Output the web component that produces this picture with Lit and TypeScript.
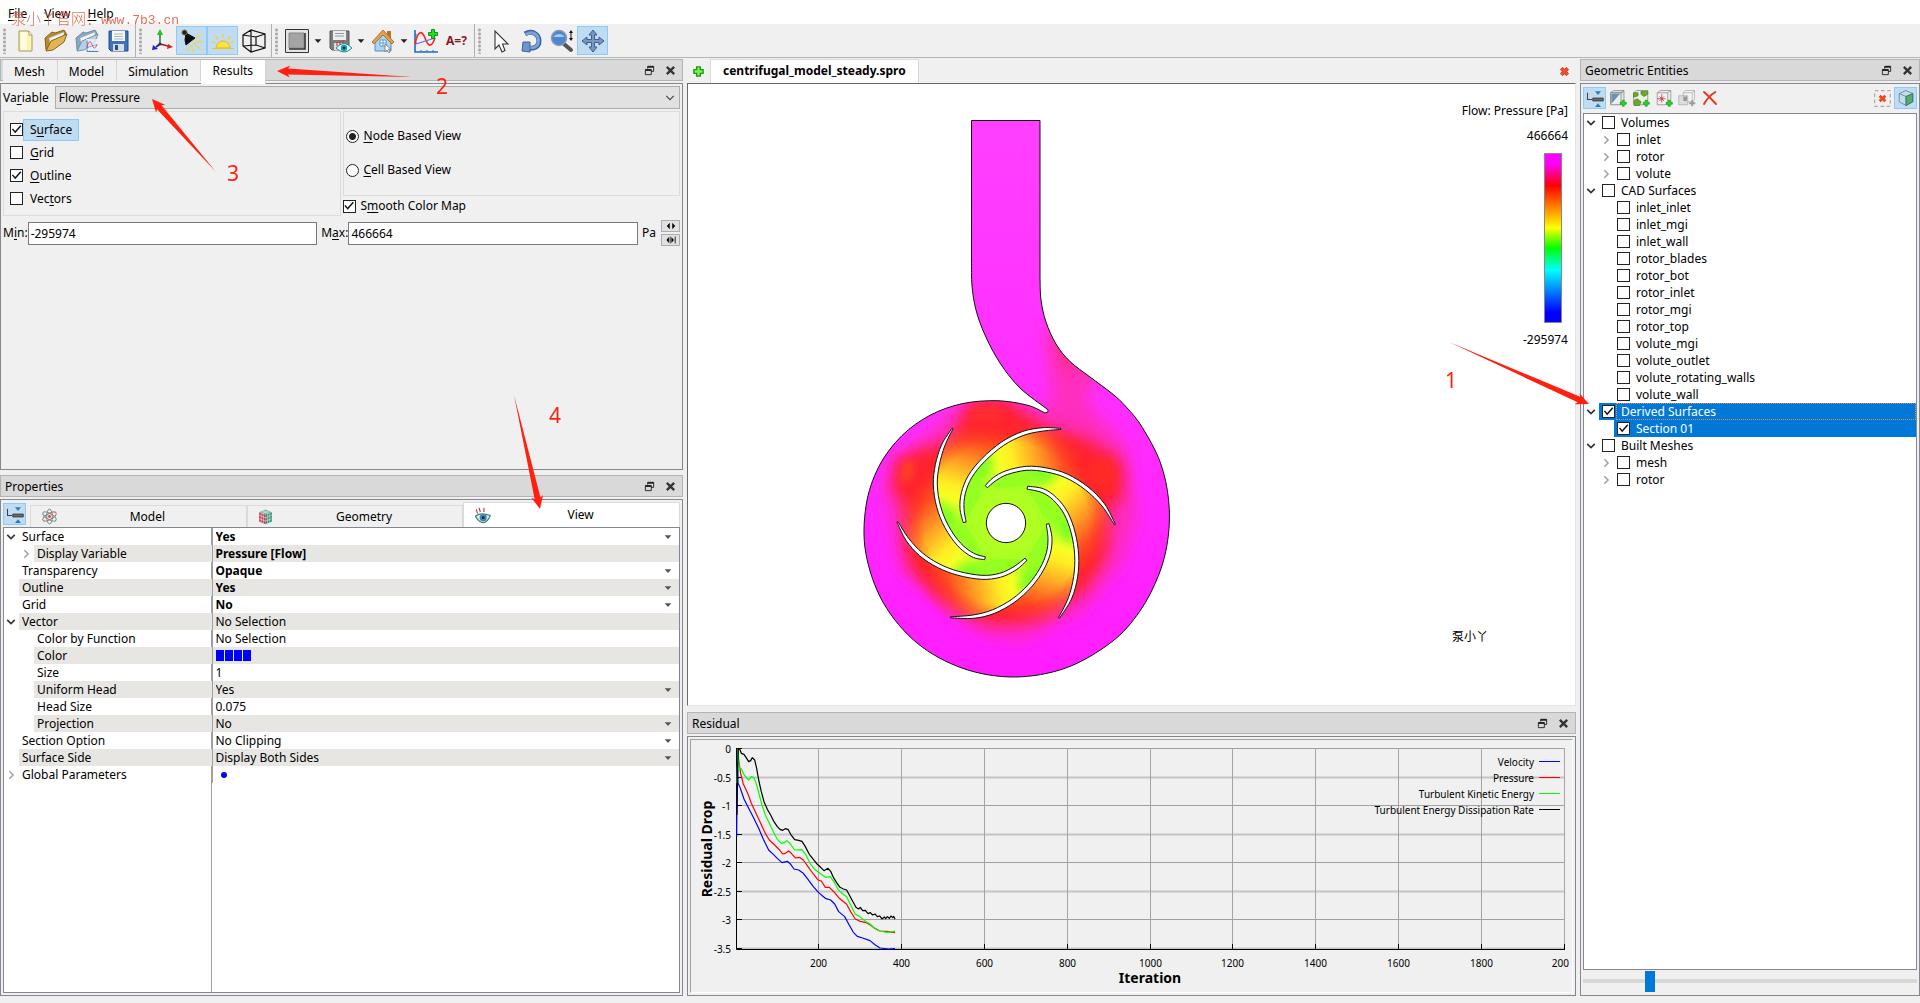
import { LitElement, html, svg, css, nothing, TemplateResult } from "lit";
import { customElement, state } from "lit/decorators.js";
import { classMap } from "lit/directives/class-map.js";

type Pt = [number, number];

/* ---------- geometry helpers ---------- */

const f = (n: number) => n.toFixed(1);

/** Smooth path through the given points (Catmull-Rom as cubic segments). */
function spline(p: Pt[], start = "M"): string {
  let d = `${start}${f(p[0][0])} ${f(p[0][1])}`;
  for (let i = 0; i < p.length - 1; i++) {
    const a = p[Math.max(0, i - 1)], b = p[i], c = p[i + 1], e = p[Math.min(p.length - 1, i + 2)];
    d += `C${f(b[0] + (c[0] - a[0]) / 6)} ${f(b[1] + (c[1] - a[1]) / 6)} ${f(c[0] - (e[0] - b[0]) / 6)} ${f(c[1] - (e[1] - b[1]) / 6)} ${f(c[0])} ${f(c[1])}`;
  }
  return d;
}

/** Closed blade profile around a centre line, pointed at its first point. */
function bladeShape(p: Pt[]): string {
  const left: Pt[] = [], right: Pt[] = [];
  p.forEach((q, i) => {
    const a = p[Math.max(0, i - 1)], b = p[Math.min(p.length - 1, i + 1)];
    const len = Math.hypot(b[0] - a[0], b[1] - a[1]);
    const nx = -(b[1] - a[1]) / len, ny = (b[0] - a[0]) / len;
    const w = i === 0 ? 1.5 : i === p.length - 1 ? 4.5 : i === 1 ? 5 : 6;
    left.push([q[0] + nx * w, q[1] + ny * w]);
    right.push([q[0] - nx * w, q[1] - ny * w]);
  });
  return spline(left) + spline(right.reverse(), "L") + "Z";
}

/** Tapered arrow from tail to tip. */
function arrow(tail: Pt, tip: Pt): string {
  const dx = tip[0] - tail[0], dy = tip[1] - tail[1], l = Math.hypot(dx, dy);
  const ux = dx / l, uy = dy / l;
  const at = (back: number, side: number) =>
    `${f(tip[0] - ux * back - uy * side)},${f(tip[1] - uy * back + ux * side)}`;
  return [`${tail[0]},${tail[1]}`, at(11, 3), at(13, 6), at(0, 0), at(13, -6), at(11, -3)].join(" ");
}

/* ---------- pump section ---------- */

/** Volute wall as [angle in degrees, radius] around its base point, from the tongue round to the diffuser. */
const VOLUTE: Pt[] = [[-84, 122.5], [-98, 127.5], [-113, 134], [-127, 140], [-141, 145], [-156, 148.500], [-172, 150],
  [-190, 151], [-210, 151.500], [-230, 151.500], [-250, 150.500], [-270, 150], [-290, 150], [-310, 150.500], [-326, 151],
  [-342, 152], [-356, 154], [-370, 156.500], [-384, 159.500], [-398, 162], [-407, 164]];
const wall: Pt[] = VOLUTE.map(([a, r]) => {
  const t = (a * Math.PI) / 180;
  return [1014.5 + r * Math.cos(t), 527 + r * Math.sin(t)];
});
const PIPE_INNER: Pt[] = [[971.5, 262], [972, 286], [976, 310], [985, 335], [1000, 363], [1020, 388], [1047, 409]];
const DIFFUSER: Pt[] = [[1112, 393.5], [1090, 377], [1070, 361.5], [1056, 344], [1046, 322], [1041, 300], [1040, 278]];
const CASING = `M971.5 120.5${spline(PIPE_INNER, "L")}Q1050 412 1045 413${spline([[1045, 413], ...wall, ...DIFFUSER], "L")}L1040 120.5Z`;

const BLADES: Pt[][] = [
  [[338, 145], [310, 195], [292, 255], [286, 315], [296, 380], [320, 440], [357, 493], [398, 525], [435, 535]],
  [[663, 147], [610, 148], [550, 160], [488, 191], [430, 240], [390, 290], [370, 340], [366, 385], [374, 427]],
  [[825, 434], [790, 375], [740, 325], [680, 288], [620, 270], [560, 265], [500, 278], [463, 298], [439, 320]],
  [[657, 714], [690, 655], [707, 590], [710, 525], [700, 460], [678, 400], [645, 357], [608, 332], [562, 323]],
  [[331, 712], [400, 710], [460, 695], [520, 662], [570, 617], [605, 568], [625, 520], [630, 475], [623, 432]],
  [[172, 425], [202, 478], [243, 523], [295, 557], [355, 580], [425, 592], [480, 586], [525, 565], [558, 538]],
];
const PASSAGE = spline(BLADES[1]) + spline([...BLADES[2]].reverse(), "L") + "L870 260L760 120Z";

const pump = svg`
  <defs>
    <linearGradient id="body" x1="0" y1="0" x2="0" y2="1">
      <stop offset="0" stop-color="#ff40ff"/><stop offset="1" stop-color="#ff1cff"/>
    </linearGradient>
    <linearGradient id="passage" gradientUnits="userSpaceOnUse" x1="410" y1="300" x2="800" y2="205">
      <stop offset="0" stop-color="#96ff22"/><stop offset=".1" stop-color="#b4ff22"/>
      <stop offset=".2" stop-color="#f6ff24"/><stop offset=".3" stop-color="#ffec24"/>
      <stop offset=".48" stop-color="#ffa024"/><stop offset=".66" stop-color="#ff4c20"/>
      <stop offset=".8" stop-color="#ff2824"/><stop offset=".9" stop-color="#ff2828" stop-opacity=".4"/>
      <stop offset="1" stop-color="#ff2828" stop-opacity="0"/>
    </linearGradient>
    <radialGradient id="eye">
      <stop offset="0" stop-color="#c0ff22"/><stop offset=".75" stop-color="#aaff22"/><stop offset="1" stop-color="#b4ff22"/>
    </radialGradient>
    <radialGradient id="reach" gradientUnits="userSpaceOnUse" cx="498" cy="429" r="340">
      <stop offset=".72" stop-color="#fff"/><stop offset="1" stop-color="#000"/>
    </radialGradient>
    <mask id="rim" maskUnits="userSpaceOnUse" x="100" y="50" width="800" height="760"><rect x="100" y="50" width="800" height="760" fill="url(#reach)"/></mask>
    <filter id="soft" x="-50%" y="-50%" width="200%" height="200%"><feGaussianBlur stdDeviation="24"/></filter>
    <filter id="mild" x="-50%" y="-50%" width="200%" height="200%"><feGaussianBlur stdDeviation="12"/></filter>
    <clipPath id="casing"><path d=${CASING}/></clipPath>
    <clipPath id="channel"><path d=${PASSAGE}/></clipPath>
  </defs>
  <g clip-path="url(#casing)">
    <rect x="860" y="115" width="315" height="570" fill="url(#body)"/>
    <g transform="translate(840 380) scale(.3333)">
      <g filter="url(#soft)">
        <path d="M610-180L690-90L790-20L730 60L860 200L890 420L840 560L720 700L560 780L430 770L330 690L180 570L130 320L230 190L340 90L560 70L640 80Z" fill="#ff2c90" opacity=".6"/>
        <path d="M380 60L500 50L620 140L740 170L850 240L855 350L800 400L790 540L730 640L600 700L480 730L400 715L310 650L210 570L190 480L215 400L150 330L160 240L240 200L330 190Z" fill="#ff2230"/>
        <path d="M630-150L710-90L690-20Z" fill="#ff2a60"/>
      </g>
      <g filter="url(#mild)">
        <ellipse cx="440" cy="105" rx="50" ry="26" fill="#ff2e30"/>
        <ellipse cx="203" cy="275" rx="16" ry="34" fill="#ff4a24" transform="rotate(20 203 275)"/>
        <ellipse cx="785" cy="285" rx="45" ry="50" fill="#ff2a26"/>
        <circle cx="498" cy="429" r="210" fill="#ff9a24"/>
      </g>
      <circle cx="498" cy="429" r="150" fill="url(#eye)"/>
      <g mask="url(#rim)">
      ${[0, 60, 120, 180, 240, 300].map((a) => svg`
        <g transform="rotate(${a} 498 429)"><g clip-path="url(#channel)">
          <path d=${PASSAGE} fill="url(#passage)"/>
          <ellipse cx="428" cy="262" rx="14" ry="36" fill="#5cff28" opacity=".7" filter="url(#mild)" transform="rotate(38 428 262)"/>
        </g></g>`)}
      </g>
    </g>
  </g>
  <path d=${CASING} fill="none" stroke="#111" stroke-width="1"/>
  <g transform="translate(840 380) scale(.3333)" fill="#fff" stroke="#111" stroke-width="3" stroke-linejoin="round">
    ${BLADES.map((b) => svg`<path d=${bladeShape(b)}/>`)}
    <circle cx="498" cy="429" r="59"/>
  </g>`;

/* ---------- residual history ---------- */

const X0 = 736, X1 = 1565, Y0 = 748, Y1 = 949;
const CURVES: { name: string; color: string; pts: string }[] = [
  { name: "Velocity", color: "#0000ff", pts: "170,410 172,150 174,250 180,262 192,297 206,325 220,352 236,385 250,418 266,450 280,463 292,475 306,488 322,484 332,493 342,507 356,510 370,520 384,538 400,560 416,578 436,595 452,600 464,612 476,635 494,650 506,672 520,697 532,709 548,714 570,722 586,735 600,744 625,747 645,746" },
  { name: "Pressure", color: "#ff0000", pts: "172,147 176,180 182,220 190,252 204,282 214,310 228,340 242,370 256,400 268,420 284,435 296,447 308,462 316,460 326,453 334,460 346,474 358,472 370,480 384,500 400,522 414,540 424,543 436,562 448,562 462,576 478,595 500,613 512,635 526,657 540,664 556,667 572,676 586,686 600,693 620,694 645,698" },
  { name: "Turbulent Kinetic Energy", color: "#00ff00", pts: "171,250 174,147 178,210 184,206 192,224 200,234 206,240 214,230 222,233 230,255 238,285 246,315 256,345 268,370 280,395 292,418 304,430 312,428 320,422 330,430 344,450 366,449 378,465 390,490 404,508 420,520 436,532 450,530 462,545 474,568 486,580 500,590 512,615 526,643 540,650 556,664 570,672 584,685 600,693 620,697 645,694" },
  { name: "Turbulent Energy Dissipation Rate", color: "#000000", pts: "171,345 173,200 175,147 179,147 184,160 192,163 200,175 206,185 212,182 217,173 224,180 230,205 236,240 244,275 252,305 262,328 272,345 282,365 292,380 300,388 308,391 316,386 324,388 332,403 344,419 356,421 366,424 376,440 388,463 400,478 412,493 422,502 432,512 444,505 452,514 460,532 470,548 480,562 490,567 500,570 508,585 518,604 528,622 536,627 541,622 548,632 556,631 564,641 571,638 578,645 585,642 592,650 599,648 606,657 613,651 617,656 622,650 628,655 633,648 638,653 641,649 645,658" },
];
const Y_TICKS = ["0", "-0.5", "-1", "-1.5", "-2", "-2.5", "-3", "-3.5"];
const X_TICKS = ["200", "400", "600", "800", "1000", "1200", "1400", "1600", "1800", "200"];

const residualPlot = () => svg`
  ${Y_TICKS.map((t, i) => {
    const y = Math.round(Y0 + i * 28.5) + 0.5;
    return svg`<path d="M${X0} ${y}H${X1}" stroke=${i % 2 ? "#c4c4c6" : "#a0a0a4"} stroke-width=${i % 2 ? 2 : 1}/>
      <path d="M${X0} ${y}h6" stroke="#000"/>
      <text x="731" y=${y + 4} text-anchor="end">${t}</text>`;
  })}
  ${X_TICKS.map((t, i) => {
    const x = Math.round(X0 + (i + 1) * 82.9) - 0.5;
    return svg`<path d="M${x} ${Y0}V${Y1}" stroke="#a4a4a8"/><path d="M${x} ${Y1}v-5" stroke="#000"/>
      <text x=${i === 9 ? 1569 : x} y="967" text-anchor=${i === 9 ? "end" : "middle"}>${t}</text>`;
  })}
  <path d="M736.5 748V949.5H1565" fill="none" stroke="#000"/>
  <g transform="translate(680 700) scale(.3333)" fill="none" stroke-width="3.6" stroke-linejoin="round">
    ${CURVES.map((c) => svg`<polyline points=${c.pts} stroke=${c.color}/>`)}
  </g>
  ${CURVES.map((c, i) => svg`<text x="1534" y=${766 + i * 16} text-anchor="end">${c.name}</text>
    <path d="M1539 ${761.5 + i * 16}h21" stroke=${c.color}/>`)}
  <text class="axis" x="1150" y="983" text-anchor="middle">Iteration</text>
  <text class="axis" transform="translate(712 849) rotate(-90)" text-anchor="middle">Residual Drop</text>`;

/* ---------- icons ---------- */

const icon = (body: TemplateResult, size = 24) =>
  html`<svg width=${size} height=${size} viewBox="0 0 24 24" fill="none" aria-hidden="true">${body}</svg>`;

const plus = (x: number, y: number, s = 1) =>
  svg`<path transform="translate(${x} ${y}) scale(${s})" d="M-1.5-4.5h3v3h3v3h-3v3h-3v-3h-3v-3h3z" fill="#1fe01f" stroke="#0a8a0a" stroke-width=".9"/>`;

const folder = (a: string, b: string, edge: string) => svg`
  <path d="M2 21L1 9L8 3L11 4L20 1L22 4L20 9z" fill=${a} stroke=${edge} stroke-width=".9"/>
  <path d="M5 9L20 3L20 8L7 19z" fill="#f4f4f4" stroke="#aaa" stroke-width=".5"/>
  <path d="M2 22L7 12L23 5L20 13L9 21z" fill=${b} stroke=${edge} stroke-width=".9"/>`;

const waves = svg`<path d="M1 1V23H24" stroke="#1d6fb8" stroke-width="1.6"/>
  <path d="M7 23v-2M13 23v-2M19 23v-2M1 6h2M1 14h2" stroke="#1d6fb8"/>
  <path d="M1 15C4 1 8 1 11 9S17 20 21 9" stroke="#ff2424" stroke-width="1.6"/><path d="M2 15L21 9" stroke="#6a6af0" stroke-width="1.3"/>`;

const I = {
  newFile: svg`<path d="M6 2h10l3 4v16H6z" fill="#fbf3b4" stroke="#a89a5a"/><path d="M8 3h6v18H8z" fill="#fffbe0"/><path d="M16 2v4h3" fill="#fff" stroke="#a89a5a"/>`,
  open: folder("#b98a2c", "#e2b551", "#7c5a12"),
  openChart: svg`${folder("#86a8c0", "#b4d2e6", "#6a8aa2")}<rect x="11" y="10" width="13" height="14" fill="#eef2f8" opacity=".75"/><g transform="translate(11.500 11) scale(.5)">${waves}</g>`,
  save: svg`<path d="M3 2h19v20H5l-2-2z" fill="#3f74bb" stroke="#1e4a86"/><path d="M6 2h13v10H6z" fill="#f5f8fc"/><path d="M8 5h9M8 7.500h9M8 10h9" stroke="#aab8c8"/><path d="M7 15h11v7H7z" fill="#d4dde8"/><path d="M9 16h3v5H9z" fill="#2b4f80"/>`,
  axes: svg`<path d="M11 15V5" stroke="#1f8f3a" stroke-width="1.6"/><path d="M11 0l3 6H8z" fill="#22c422"/><path d="M11 15l8 2" stroke="#b01818" stroke-width="1.600"/><path d="M24 18l-6 2 1-5z" fill="#e02020"/><path d="M11 15l-4 3" stroke="#1818b0" stroke-width="1.600"/><path d="M3 21l1-5 5 4z" fill="#2020d0"/><circle cx="11" cy="15" r="1.500" fill="#333"/>`,
  lamp: svg`<path d="M6 4l9 5-4 3-5 4-1-5z" fill="#0c0c0c" stroke="#0c0c0c"/><circle cx="4.500" cy="3.500" r="2.500" fill="#222" stroke="#7a6a30"/><path d="M13 13l8 8M11 16l3 7M15 12l8 1M9 18l-2 5M16 9l5-4" stroke="#f4d640" stroke-width="1.700" stroke-dasharray="4 1"/>`,
  sun: svg`<path d="M5 19a7 7 0 0 1 14 0z" fill="#ffe23c" stroke="#e0b820"/><path d="M1 19.500h22" stroke="#e8c430"/><path d="M12 9V5M7 10.500L4.500 7M17 10.500L19.500 7M4 14L1 12M20 14l3-2" stroke="#f4ce34" stroke-width="1.400"/>`,
  frustum: svg`<path d="M1 6L9 1L23 5V19L9 23L1 17ZM9 1V23M1 6L14 8V16L1 17M14 8L23 5M14 16L23 19" stroke="#111" stroke-width="1.200"/>`,
  square: svg`<path d="M.5.5h23v23H.5z" fill="#e4e4e4" stroke="#333"/><path d="M4 4h15v15H4z" fill="#a4a4a4" stroke="#888"/><path d="M4 20h16V4" stroke="#333" stroke-width="1.600"/>`,
  saveEye: svg`<path d="M2 2h19v19H4l-2-2z" fill="#7c7c7c" stroke="#555"/><path d="M5 2h13v9H5z" fill="#ededed"/><path d="M7 4.500h9M7 7h9" stroke="#999"/><path d="M6 14h8v7H6z" fill="#ddd"/><path d="M9 13v4M12 12v4M15 11v4" stroke="#c03030"/><path d="M8 19q8-9 16 0q-8 8-16 0z" fill="#e6fbff" stroke="#1f8a96"/><circle cx="16" cy="19" r="3.200" fill="#1c9cb0"/><circle cx="16" cy="19" r="1.300" fill="#022"/>`,
  home: svg`<path d="M4 11v11h16V11l-8-8z" fill="#a8d4f6" stroke="#5a8fc0"/><path d="M16 2h4v8l-4-4z" fill="#b8742c"/><path d="M1 13L12 1l11 12-2 2L12 6l-9 9z" fill="#e2a04a" stroke="#9c6420" stroke-width=".8"/><path d="M9 11h6v6H9zM12 11v6M9 14h6" fill="#fff" stroke="#4a86c0" stroke-width=".8"/><path d="M14 15v8l2-2 2 3 1-1-1.500-3H20z" fill="#fff" stroke="#666" stroke-width=".7"/>`,
  chartPlus: svg`${waves}${plus(19, 5)}`,
  pointer: svg`<path d="M7 2V20L11 16L14 23L17 21.500L14.500 15H20z" fill="#fff" stroke="#333" stroke-width="1.100"/>`,
  rotate: svg`<path d="M6 5C13 1 20 5 20 12C20 18 15 20 9 19" stroke="#3d62a0" stroke-width="5"/><path d="M6.500 5.500C13 1.500 19.500 5 19.500 12C19.500 17.500 15 19.500 9 18.500" stroke="#7ba2d8" stroke-width="3"/><path d="M4 13h7v10L3 22z" fill="#6d95ce" stroke="#3d62a0"/>`,
  zoom: svg`<path d="M14 15l7 6" stroke="#555" stroke-width="4" stroke-linecap="round"/><circle cx="9" cy="9" r="7.500" fill="#4a86d2" stroke="#8a9ab0" stroke-width="1.500"/><path d="M3.500 8a6 5 0 0 1 11 0z" fill="#a4c8f0"/><path d="M21 2v9" stroke="#111"/><path d="M19 4l2-3 2 3zM19 9l2 3 2-3z" fill="#111"/>`,
  move: svg`<path d="M12 1l4 5h-2.500v4.500H18V8l5 4-5 4v-2.500h-4.500V18H16l-4 5-4-5h2.500v-4.500H6V16l-5-4 5-4v2.500h4.500V6H8z" fill="#7797c4" stroke="#3d5c90"/>`,
  collapse: svg`<path d="M2 5v9h6" stroke="#444" stroke-width="1.400"/><path d="M9 12h14v4H9z" fill="#666" stroke="#333"/><path d="M12 3h8l-4 5zM12 24h8l-4-5z" fill="#2c7cb8"/>`,
  section: svg`<path d="M2 5l4-3h14l-4 3zM16 5l4-3v14" fill="#ddd" stroke="#888"/><path d="M2 5h14v16H2z" fill="#e8f0f4" stroke="#777"/><path d="M3 6h12L3 20z" fill="#6f92ac"/>${plus(19, 19, 0.9)}`,
  iso: svg`<path d="M2 5l4-3h15v15l-4 4H2z" fill="#e8f0e8" stroke="#888"/><path d="M2 5h6v4l-6 2zM12 3h9v4l-5 3-4-3zM3 15l4-2 5 4-2 5H3z" fill="#6fa82a" stroke="#4f8418"/>${plus(19, 19, 0.9)}`,
  point: svg`<path d="M3 5l4-3h14v15l-4 4H3zM3 5h14v16M17 5l4-3" fill="#f2f2f2" stroke="#888"/><path d="M9 7v11M3 13h11M6 10l6 6M12 10l-6 6" stroke="#d82020"/>${plus(19, 19, 0.9)}`,
  boxes: svg`<path d="M7 5l3-3h12v12l-3 3H7zM7 5h12v12M19 5l3-3" fill="#f4f4f4" stroke="#aaa"/><path d="M1 9h12v12H1z" fill="#ddd" stroke="#aaa"/><path d="M7 10h5v6H7z" fill="#999"/><path d="M19 15v8M15 19h8" stroke="#999" stroke-width="2.500"/>`,
  remove: svg`<path d="M3 3q6 5 18 18M20 3Q10 9 3 21" stroke="#e8321e" stroke-width="2.800" stroke-linecap="round"/>`,
  clear: svg`<path d="M1 1h22v22H1z" stroke="#777" stroke-dasharray="5 3.800"/><path d="M8 8l8 8M16 8l-8 8" stroke="#f0481c" stroke-width="4"/>`,
  cube: svg`<path d="M3 6l9-4 9 4v11l-9 5-9-5z" fill="#c6dcec" stroke="#54788c"/><path d="M3 6l9 4 9-4M12 10v12" stroke="#54788c"/><path d="M12 10l9-4v11l-9 5z" fill="#58a878" stroke="#2c6c48"/>`,
  atom: svg`<g stroke-width="1.400"><ellipse cx="12" cy="12" rx="4" ry="10.500" stroke="#5a8f88"/><ellipse cx="12" cy="12" rx="4" ry="10.500" stroke="#c06a6a" transform="rotate(60 12 12)"/><ellipse cx="12" cy="12" rx="4" ry="10.500" stroke="#6a9a92" transform="rotate(-60 12 12)"/></g><circle cx="12" cy="12" r="2" fill="#d04848"/>`,
  rubik: svg`<path d="M3 6l9 3v14l-9-4z" fill="#c83c48"/><path d="M12 9l9-3v13l-9 4z" fill="#2f8f6c"/><path d="M3 6l9-4 9 4-9 3z" fill="#7ab8a8"/><path d="M6 7v13M9 8v14M15 8v14M18 7v13M3 10l9 4 9-4M3 15l9 3.500 9-3.500M7.500 4l9 3.500M16.500 4l-9 3.500" stroke="#eee" stroke-width=".8"/>`,
  eye: svg`<path d="M2 13Q9 7 23 12Q19 22 13 22Q6 21 2 13z" fill="#d8ecec" stroke="#3e8078" stroke-width="1.600"/><circle cx="13" cy="15" r="5" fill="#3f86b4"/><circle cx="13" cy="15" r="2" fill="#123"/><path d="M5 9L3 3M9 7L7 1M14 7V1" stroke="#a03c3c" stroke-width="1.500"/>`,
  float: svg`<path d="M8 8V3h13v11h-5" stroke="#222" stroke-width="2"/><path d="M8 4h13" stroke="#222" stroke-width="4"/><path d="M3 10h13v11H3z" stroke="#222" stroke-width="2"/><path d="M3 11h13" stroke="#222" stroke-width="4"/>`,
  close: svg`<path d="M4 4l16 16M20 4L4 20" stroke="#333" stroke-width="5"/>`,
  redX: svg`<path d="M5 5l14 14M19 5L5 19" stroke="#b8381c" stroke-width="8"/><path d="M5 5l14 14M19 5L5 19" stroke="#f4502c" stroke-width="5.500"/>`,
  addTab: svg`<path d="M8 2h8v6h6v8h-6v6H8v-6H2V8h6z" fill="#86f04c" stroke="#189a18" stroke-width="3"/>`,
  caret: svg`<path d="M2 7h20L12 18z" fill="#222"/>`,
  down: svg`<path d="M3 7l9 9 9-9" stroke="#333" stroke-width="4"/>`,
  downThin: svg`<path d="M3 7l9 9 9-9" stroke="#444" stroke-width="2.600"/>`,
  right: svg`<path d="M8 3l9 9-9 9" stroke="#a0a0a0" stroke-width="3.600"/>`,
  pick: svg`<path d="M2 7h20L12 18z" fill="#555"/>`,
  fit: svg`<path d="M9 4L2 12l7 8zM15 4l7 8-7 8z" fill="#000"/>`,
  fitIn: svg`<path d="M7 5L1 12l6 7zM13 5l6 7-6 7z" fill="#000"/><path d="M10 4v16M22 4v16" stroke="#000" stroke-width="2"/>`,
};

/* ---------- data ---------- */

interface Entity { name: string; level: 0 | 1; arrow?: "down" | "right"; on?: boolean; sel?: boolean }
const leaf = (name: string): Entity => ({ name, level: 1 });
const ENTITIES: Entity[] = [
  { name: "Volumes", level: 0, arrow: "down" },
  ...["inlet", "rotor", "volute"].map((name): Entity => ({ name, level: 1, arrow: "right" })),
  { name: "CAD Surfaces", level: 0, arrow: "down" },
  ...["inlet_inlet", "inlet_mgi", "inlet_wall", "rotor_blades", "rotor_bot", "rotor_inlet", "rotor_mgi", "rotor_top",
    "volute_mgi", "volute_outlet", "volute_rotating_walls", "volute_wall"].map(leaf),
  { name: "Derived Surfaces", level: 0, arrow: "down", on: true, sel: true },
  { name: "Section 01", level: 1, on: true, sel: true },
  { name: "Built Meshes", level: 0, arrow: "down" },
  { name: "mesh", level: 1, arrow: "right" },
  { name: "rotor", level: 1, arrow: "right" },
];

interface Prop { name: string; level: 0 | 1; value?: string; arrow?: "down" | "right"; pick?: boolean; bold?: boolean; mark?: "swatch" | "dot" }
const PROPS: Prop[] = [
  { name: "Surface", level: 0, value: "Yes", arrow: "down", pick: true, bold: true },
  { name: "Display Variable", level: 1, value: "Pressure [Flow]", arrow: "right", bold: true },
  { name: "Transparency", level: 0, value: "Opaque", pick: true, bold: true },
  { name: "Outline", level: 0, value: "Yes", pick: true, bold: true },
  { name: "Grid", level: 0, value: "No", pick: true, bold: true },
  { name: "Vector", level: 0, value: "No Selection", arrow: "down" },
  { name: "Color by Function", level: 1, value: "No Selection" },
  { name: "Color", level: 1, mark: "swatch" },
  { name: "Size", level: 1, value: "1" },
  { name: "Uniform Head", level: 1, value: "Yes", pick: true },
  { name: "Head Size", level: 1, value: "0.075" },
  { name: "Projection", level: 1, value: "No", pick: true },
  { name: "Section Option", level: 0, value: "No Clipping", pick: true },
  { name: "Surface Side", level: 0, value: "Display Both Sides", pick: true },
  { name: "Global Parameters", level: 0, arrow: "right", mark: "dot" },
];

@customElement("app-root")
export class AppRoot extends LitElement {
  @state() private view = "Node";

  static styles = css`
    :host { display: block; font: 12px/16px "Noto Sans", "Noto Sans CJK SC", sans-serif; color: #000; }
    * { box-sizing: border-box; }
    button, input, select { font: inherit; color: inherit; margin: 0; }
    button { border: 0; padding: 0; background: none; }
    svg { display: block; flex: none; }
    u { text-underline-offset: 2px; }

    .app { position: relative; display: flex; flex-direction: column; height: 100vh; background: #f0f0f0; overflow: hidden; }
    .menu { display: flex; gap: 17px; height: 24px; padding: 3px 8px 0; background: #fff; }
    .menu button { line-height: 18px; }
    .watermark { position: absolute; left: 11px; top: 8px; color: #e8593f; opacity: .9; font: 300 15px/20px "Noto Sans CJK SC", sans-serif; white-space: nowrap; }
    .watermark span { font: 13px/20px "Liberation Mono", monospace; }

    .toolbar { display: flex; height: 34px; border-bottom: 1px solid #b4b4b4; }
    .group { display: flex; align-items: center; padding-right: 2px; border-right: 1px solid #b0b0b0; }
    .group:last-child { border: 0; }
    .grip { width: 9px; height: 26px; background: radial-gradient(circle, #aaa 1px, transparent 2px) 0 0 / 9px 4px; }
    .tool { display: grid; place-items: center; width: 31px; height: 29px; }
    .tool.on { background: #c0dcf3; border: 1px solid #90c8f6; }
    .drop { width: 12px; display: grid; place-items: center; }
    .query { color: #8c1a1a; font-weight: 700; line-height: 16px; }

    .main { flex: 1; min-height: 0; display: grid; grid-template-columns: 683fr 889fr 340fr; gap: 4px; padding: 1px 0 7px; }
    .column { display: grid; gap: 5px; min-width: 0; min-height: 0; }
    .left { grid-template-rows: 411fr 521fr; }
    .center { grid-template-rows: 647fr 284fr; gap: 6px; }
    .dock { display: flex; flex-direction: column; min-width: 0; min-height: 0; }
    .bar { display: flex; align-items: center; gap: 10px; height: 22px; flex: none; padding: 1px 6px 0 4px; background: #d9d9d9; border: 1px solid #b4b4b4; margin-bottom: 2px; }
    .bar h2 { flex: 1; margin: 0; font: inherit; }
    .bar.tabs { padding-left: 2px; padding-top: 0; }
    .tabs .strip { flex: 1; display: flex; align-self: stretch; }
    .tab { background: #f0f0f0; border-right: 1px solid #d4d4d4; padding: 2px 12px 0 11px; height: 21px; }
    .tab.on { background: #fff; height: 24px; padding-bottom: 4px; position: relative; }
    .panel { flex: 1; min-height: 0; border: 1px solid #828790; padding: 2px; display: flex; flex-direction: column; }

    .row { display: flex; align-items: center; }
    .variable { gap: 6px; height: 23px; margin-bottom: 2px; }
    .combo { flex: 1; position: relative; display: grid; align-items: center; }
    .combo select { appearance: none; width: 100%; height: 23px; padding: 0 3px; border: 1px solid #adadad; border-radius: 0; background: #e1e1e1; }
    .combo svg { position: absolute; right: 5px; pointer-events: none; }
    .options { display: grid; grid-template-columns: 1fr 1fr; gap: 2px; align-items: start; margin-bottom: 4px; }
    .frame { border: 1px solid #dcdcdc; }
    .show { height: 105px; padding: 6px; display: grid; grid-auto-rows: 23px; }
    .based { height: 85px; padding: 7px 2px; display: grid; grid-auto-rows: 34px; }
    label.row { gap: 5px; }
    .show label span { padding: 0 6px 0 1px; line-height: 20px; border: 1px solid transparent; }
    .show label { gap: 5px; }
    .show label.hot { gap: 0; }
    .show label.hot span { padding-left: 6px; background: #c0dcf3; border-color: #90c8f6; }
    .smooth { height: 20px; }
    input[type="checkbox"] { appearance: none; flex: none; width: 13px; height: 13px; border: 1px solid #222; background: #fff; display: grid; }
    input[type="checkbox"]:checked::before { content: ""; background: #111; clip-path: polygon(8% 48%, 18% 40%, 38% 64%, 84% 12%, 94% 20%, 38% 84%); }
    input[type="radio"] { appearance: none; flex: none; width: 13px; height: 13px; border: 1px solid #222; border-radius: 50%; background: #fff; }
    input[type="radio"]:checked { background: radial-gradient(circle, #222 3px, #fff 4px); }
    .range label { display: contents; }
    .range input { flex: 1; min-width: 0; height: 23px; padding: 0 2px; border: 1px solid #7a7a7a; border-radius: 0; background: #fff; }
    .range .gap { margin-left: 4px; }
    .fits { display: grid; gap: 2px; margin-left: 5px; }
    .fits button { width: 19px; height: 12px; display: grid; place-items: center; border: 1px solid #adadad; background: #e1e1e1; }

    .ptabs { display: flex; align-items: flex-end; height: 25px; flex: none; }
    .ptabs .collapse { width: 23px; height: 22px; margin: 0 4px 2px 0; }
    .ptab { flex: 1; display: grid; grid-template-columns: 36px 1fr 18px; align-items: center; justify-items: center; height: 22px; border: 1px solid #dadada; border-bottom: 0; }
    .ptab.on { background: #fff; height: 25px; }
    .sheet { flex: 1; min-height: 0; overflow: hidden; border: 1px solid #828790; background: #fff linear-gradient(#a0a0a4, #a0a0a4) 207px 0 / 1px 100% no-repeat; }
    table { width: 100%; border-collapse: collapse; table-layout: fixed; }
    td, th { padding: 0; height: 17px; line-height: 17px; font-weight: 400; text-align: left; }
    th { width: 208px; border-right: 1px solid #a0a0a4; }
    .cell { display: flex; }
    .cell span { flex: 1; padding-left: 3px; }
    .twist { width: 15px; height: 17px; display: grid; place-items: center; flex: none; }
    .twist.in { margin-left: 15px; }
    .sheet .twist { padding-right: 1px; }
    tr:nth-child(even) .cell span, tr:nth-child(even) td { background: #e8e6e3; }
    td .cell { padding: 0 7px 0 3px; align-items: center; }
    td .bold { font-weight: 700; }
    td select { appearance: none; flex: 1; height: 17px; line-height: 17px; padding: 0; border: 0; background: none; }
    .swatch { display: flex; gap: 1px; }
    .swatch i { width: 8px; height: 11px; background: #00f; }
    .dot { width: 6px; height: 6px; margin-left: 5px; border-radius: 50%; background: #00f; }

    .docs { display: flex; align-items: center; height: 24px; flex: none; padding: 0 6px 0 4px; }
    .docs .add { width: 19px; display: grid; justify-content: center; padding-right: 4px; }
    .doc { height: 24px; padding: 0 12px 2px; background: #fff; border: 1px solid #dadada; border-bottom: 0; font-weight: 700; }
    .docs .end { margin-left: auto; }
    .canvas { flex: 1; min-height: 0; background: #fff; border: 1px solid #696969; border-right-color: #e3e3e3; border-bottom-color: #e3e3e3; }
    .canvas svg, .plot svg { width: 100%; height: 100%; }
    .canvas text { font: 12px "Noto Sans", "Noto Sans CJK SC", sans-serif; }
    .plot { flex: 1; min-height: 0; border: 1px solid #a0a0a0; border-right-color: #fff; border-bottom-color: #fff; }
    .plot text { font: 10px "Noto Sans", sans-serif; }
    .plot text.axis { font: 700 14px "Noto Sans", sans-serif; }

    .side .panel { padding: 3px 2px; }
    .icons { display: flex; align-items: center; height: 22px; flex: none; margin-bottom: 4px; }
    .icons button { width: 23px; height: 22px; display: grid; place-items: center; }
    .icons .on, .ptabs .collapse { display: grid; place-items: center; background: #c0dcf3; border: 1px solid #90c8f6; }
    .icons .push { margin-left: auto; }
    .tree { flex: 1; min-height: 0; margin: 0; padding: 0; list-style: none; overflow: hidden; border: 1px solid #828790; background: #fff; }
    .tree li { display: flex; height: 17px; }
    .tree label { flex: 1; display: flex; align-items: center; padding-left: 3px; }
    .tree label span { flex: 1; padding-left: 5px; margin-left: 1px; line-height: 17px; }
    .tree .sel label { background: #0078d7; color: #fff; }
    .tree .focus span { line-height: 15px; border: 1px dotted #e09050; padding-left: 4px; }
    .tree .twist { padding-right: 1px; }
    .slider { display: block; appearance: none; width: 100%; height: 22px; flex: none; background: linear-gradient(#d6dad6, #d6dad6) 0 9px / 100% 4px no-repeat; }
    .slider::-webkit-slider-thumb { appearance: none; width: 10px; height: 21px; background: #0078d7; }

    .notes { position: absolute; left: 0; top: 0; pointer-events: none; fill: #ff2010; }
    .notes text { font: 21px "Noto Sans", sans-serif; }
  `;

  private tool(name: string, body: TemplateResult, on = false) {
    return html`<button class=${classMap({ tool: true, on })} aria-label=${name}>${icon(body)}</button>`;
  }

  private drop(name: string) {
    return html`<button class="drop" aria-label=${name}>${icon(I.caret, 8)}</button>`;
  }

  private dockButtons() {
    return html`<button aria-label="Float">${icon(I.float, 11)}</button><button aria-label="Close">${icon(I.close, 11)}</button>`;
  }

  private twist(row: { name: string; arrow?: "down" | "right"; level: number }) {
    const cls = classMap({ twist: true, in: row.level === 1 });
    return row.arrow
      ? html`<button class=${cls} aria-label="Toggle ${row.name}">${icon(I[row.arrow], 10)}</button>`
      : html`<div class=${cls}></div>`;
  }

  private results() {
    return html`<section class="dock">
      <div class="bar tabs">
        <div class="strip" role="tablist">
          ${["Mesh", "Model", "Simulation", "Results"].map((t) => html`
            <button role="tab" class=${classMap({ tab: true, on: t === "Results" })}>${t}</button>`)}
        </div>
        ${this.dockButtons()}
      </div>
      <div class="panel">
        <div class="row variable">
          <label for="variable">Va<u>r</u>iable</label>
          <div class="combo"><select id="variable"><option>Flow: Pressure</option></select>${icon(I.downThin, 10)}</div>
        </div>
        <div class="options">
          <div class="frame show">
            <label class="row hot"><input type="checkbox" checked><span>S<u>u</u>rface</span></label>
            <label class="row"><input type="checkbox"><span><u>G</u>rid</span></label>
            <label class="row"><input type="checkbox" checked><span><u>O</u>utline</span></label>
            <label class="row"><input type="checkbox"><span>Vec<u>t</u>ors</span></label>
          </div>
          <div>
            <div class="frame based">
              <label class="row"><input type="radio" name="based" .checked=${this.view === "Node"} @change=${() => (this.view = "Node")}><span><u>N</u>ode Based View</span></label>
              <label class="row"><input type="radio" name="based" .checked=${this.view === "Cell"} @change=${() => (this.view = "Cell")}><span><u>C</u>ell Based View</span></label>
            </div>
            <label class="row smooth"><input type="checkbox" checked><span>S<u>m</u>ooth Color Map</span></label>
          </div>
        </div>
        <div class="row range">
          <label for="min"><span>M<u>i</u>n:</span></label><input id="min" value="-295974">
          <label for="max"><span class="gap">M<u>a</u>x:</span></label><input id="max" value="466664">
          <span class="gap">Pa</span>
          <div class="fits"><button aria-label="Expand range">${icon(I.fit, 10)}</button><button aria-label="Fit range">${icon(I.fitIn, 10)}</button></div>
        </div>
      </div>
    </section>`;
  }

  private properties() {
    const tabs: [string, TemplateResult][] = [["Model", I.atom], ["Geometry", I.rubik], ["View", I.eye]];
    return html`<section class="dock">
      <div class="bar"><h2>Properties</h2>${this.dockButtons()}</div>
      <div class="panel">
        <div class="ptabs" role="tablist">
          <button class="collapse" aria-label="Collapse">${icon(I.collapse, 18)}</button>
          ${tabs.map(([t, i]) => html`<button role="tab" class=${classMap({ ptab: true, on: t === "View" })}>${icon(i, 17)}<span>${t}</span></button>`)}
        </div>
        <div class="sheet"><table><tbody>
          ${PROPS.map((p) => html`<tr>
            <th scope="row"><div class="cell">${this.twist(p)}<span>${p.name}</span></div></th>
            <td><div class=${classMap({ cell: true, bold: !!p.bold })}>${this.value(p)}</div></td>
          </tr>`)}
        </tbody></table></div>
      </div>
    </section>`;
  }

  private value(p: Prop) {
    if (p.mark === "swatch") return html`<div class="swatch"><i></i><i></i><i></i><i></i></div>`;
    if (p.mark === "dot") return html`<div class="dot"></div>`;
    if (p.pick) return html`<select aria-label=${p.name}><option>${p.value}</option></select>${icon(I.pick, 8)}`;
    return p.value ?? nothing;
  }

  private viewport() {
    return html`<section class="dock">
      <div class="docs">
        <button class="add" aria-label="New tab">${icon(I.addTab, 11)}</button>
        <button class="doc" role="tab">centrifugal_model_steady.spro</button>
        <button class="end" aria-label="Close project">${icon(I.redX, 11)}</button>
      </div>
      <div class="canvas">
        <svg viewBox="688 84 887 621" role="img" aria-label="Pressure section">
          <defs><linearGradient id="scale" x1="0" y1="0" x2="0" y2="1">
            <stop offset=".06" stop-color="#f0f"/><stop offset=".19" stop-color="#f00"/><stop offset=".44" stop-color="#ff0"/>
            <stop offset=".56" stop-color="#0f0"/><stop offset=".69" stop-color="#0ff"/><stop offset=".94" stop-color="#00f"/>
          </linearGradient></defs>
          ${pump}
          <text x="1568" y="115" text-anchor="end">Flow: Pressure [Pa]</text>
          <text x="1568" y="140" text-anchor="end">466664</text>
          <rect x="1544.500" y="153.500" width="17" height="169" fill="url(#scale)" stroke="#888"/>
          <text x="1568" y="344" text-anchor="end">-295974</text>
          <text x="1452" y="641">泵小丫</text>
        </svg>
      </div>
    </section>`;
  }

  private residual() {
    return html`<section class="dock">
      <div class="bar"><h2>Residual</h2>${this.dockButtons()}</div>
      <div class="panel"><div class="plot">
        <svg viewBox="691 740 881 252" role="img" aria-label="Residual history">${residualPlot()}</svg>
      </div></div>
    </section>`;
  }

  private entities() {
    return html`<section class="dock side">
      <div class="bar"><h2>Geometric Entities</h2>${this.dockButtons()}</div>
      <div class="panel">
        <div class="icons">
          <button class="on" aria-label="Collapse">${icon(I.collapse, 18)}</button>
          <button aria-label="Add section">${icon(I.section, 18)}</button>
          <button aria-label="Add isosurface">${icon(I.iso, 18)}</button>
          <button aria-label="Add point">${icon(I.point, 18)}</button>
          <button aria-label="Add box">${icon(I.boxes, 18)}</button>
          <button aria-label="Delete">${icon(I.remove, 16)}</button>
          <button class="push" aria-label="Clear selection">${icon(I.clear, 17)}</button>
          <button class="on" aria-label="Pick faces">${icon(I.cube, 18)}</button>
        </div>
        <ul class="tree">
          ${ENTITIES.map((e) => html`<li class=${classMap({ sel: !!e.sel })}>
            ${this.twist(e)}
            <label class=${classMap({ focus: !!e.sel && e.level === 0 })}><input type="checkbox" .checked=${!!e.on}><span>${e.name}</span></label>
          </li>`)}
        </ul>
        <input class="slider" type="range" aria-label="Opacity" min="0" max="100" value="19">
      </div>
    </section>`;
  }

  render() {
    return html`<div class="app">
      <nav class="menu"><button><u>F</u>ile</button><button><u>V</u>iew</button><button><u>H</u>elp</button></nav>
      <div class="watermark">泵小丫官网：<span>www.7b3.cn</span></div>
      <div class="toolbar" role="toolbar">
        <div class="group"><i class="grip"></i>
          ${this.tool("New", I.newFile)}${this.tool("Open", I.open)}${this.tool("Open results", I.openChart)}${this.tool("Save", I.save)}
        </div>
        <div class="group"><i class="grip"></i>
          ${this.tool("Axes", I.axes)}${this.tool("Spot light", I.lamp, true)}${this.tool("Ambient light", I.sun, true)}${this.tool("Perspective", I.frustum)}
        </div>
        <div class="group"><i class="grip"></i>
          ${this.tool("View direction", I.square)}${this.drop("View directions")}
          ${this.tool("Save view", I.saveEye)}${this.drop("Saved views")}
          ${this.tool("Home view", I.home)}${this.drop("Home views")}
          ${this.tool("Add plot", I.chartPlus)}<button class="tool query">A=?</button>
        </div>
        <div class="group"><i class="grip"></i>
          ${this.tool("Select", I.pointer)}${this.tool("Rotate", I.rotate)}${this.tool("Zoom", I.zoom)}${this.tool("Pan", I.move, true)}
        </div>
      </div>
      <main class="main">
        <div class="column left">${this.results()}${this.properties()}</div>
        <div class="column center">${this.viewport()}${this.residual()}</div>
        ${this.entities()}
      </main>
      <svg class="notes" width="1920" height="1003" aria-hidden="true">
        <polygon points=${arrow([1449, 342], [1589, 404])}/><text x="1445" y="388">1</text>
        <polygon points=${arrow([412, 77], [277, 71])}/><text x="436" y="94">2</text>
        <polygon points=${arrow([216, 172], [152, 99])}/><text x="227" y="181">3</text>
        <polygon points=${arrow([514, 395], [540, 509])}/><text x="549" y="423">4</text>
      </svg>
    </div>`;
  }
}
